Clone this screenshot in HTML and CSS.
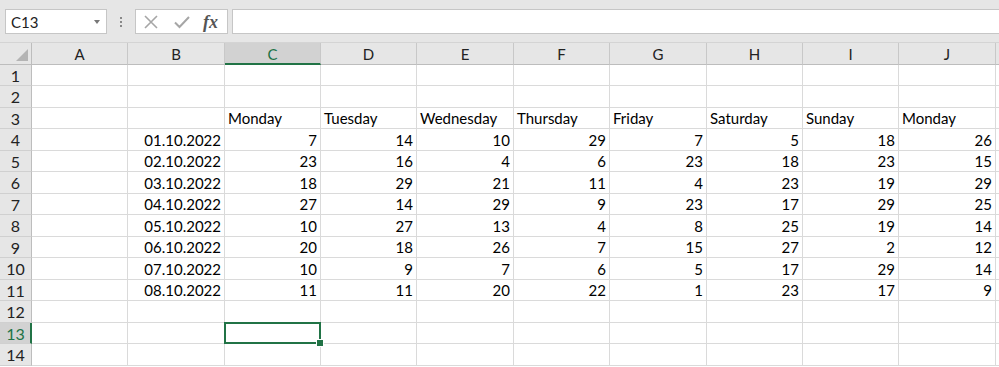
FILE: index.html
```html
<!DOCTYPE html>
<html>
<head>
<meta charset="utf-8">
<link rel="stylesheet" href="styles.css">
</head>
<body>
<div class="toolbar">
  <div class="namebox"><span>C13</span><span class="dd"></span></div>
  <div class="grip"><i></i><i></i><i></i></div>
  <div class="fbuttons">
    <svg class="ico" width="16" height="16" viewBox="0 0 16 16"><path d="M2 2L14 14M14 2L2 14" stroke="#a6a6a6" stroke-width="1.6" fill="none"/></svg>
    <svg class="ico" width="18" height="16" viewBox="0 0 18 16"><path d="M2 8.5L6.5 13L16 3" stroke="#a6a6a6" stroke-width="2" fill="none"/></svg>
    <span class="fx">fx</span>
  </div>
  <div class="finput"></div>
</div>
<div class="sheet">
  <div class="corner"></div><div class="ch">A</div><div class="ch">B</div><div class="ch sel">C</div><div class="ch">D</div><div class="ch">E</div><div class="ch">F</div><div class="ch">G</div><div class="ch">H</div><div class="ch">I</div><div class="ch">J</div><div class="ch"></div>

  <div class="rh">1</div><div class="c"></div><div class="c"></div><div class="c"></div><div class="c"></div><div class="c"></div><div class="c"></div><div class="c"></div><div class="c"></div><div class="c"></div><div class="c"></div><div class="c"></div>
  <div class="rh">2</div><div class="c"></div><div class="c"></div><div class="c"></div><div class="c"></div><div class="c"></div><div class="c"></div><div class="c"></div><div class="c"></div><div class="c"></div><div class="c"></div><div class="c"></div>
  <div class="rh">3</div><div class="c"></div><div class="c"></div><div class="c">Monday</div><div class="c">Tuesday</div><div class="c">Wednesday</div><div class="c">Thursday</div><div class="c">Friday</div><div class="c">Saturday</div><div class="c">Sunday</div><div class="c">Monday</div><div class="c"></div>
  <div class="rh">4</div><div class="c"></div><div class="c n">01.10.2022</div><div class="c n">7</div><div class="c n">14</div><div class="c n">10</div><div class="c n">29</div><div class="c n">7</div><div class="c n">5</div><div class="c n">18</div><div class="c n">26</div><div class="c"></div>
  <div class="rh">5</div><div class="c"></div><div class="c n">02.10.2022</div><div class="c n">23</div><div class="c n">16</div><div class="c n">4</div><div class="c n">6</div><div class="c n">23</div><div class="c n">18</div><div class="c n">23</div><div class="c n">15</div><div class="c"></div>
  <div class="rh">6</div><div class="c"></div><div class="c n">03.10.2022</div><div class="c n">18</div><div class="c n">29</div><div class="c n">21</div><div class="c n">11</div><div class="c n">4</div><div class="c n">23</div><div class="c n">19</div><div class="c n">29</div><div class="c"></div>
  <div class="rh">7</div><div class="c"></div><div class="c n">04.10.2022</div><div class="c n">27</div><div class="c n">14</div><div class="c n">29</div><div class="c n">9</div><div class="c n">23</div><div class="c n">17</div><div class="c n">29</div><div class="c n">25</div><div class="c"></div>
  <div class="rh">8</div><div class="c"></div><div class="c n">05.10.2022</div><div class="c n">10</div><div class="c n">27</div><div class="c n">13</div><div class="c n">4</div><div class="c n">8</div><div class="c n">25</div><div class="c n">19</div><div class="c n">14</div><div class="c"></div>
  <div class="rh">9</div><div class="c"></div><div class="c n">06.10.2022</div><div class="c n">20</div><div class="c n">18</div><div class="c n">26</div><div class="c n">7</div><div class="c n">15</div><div class="c n">27</div><div class="c n">2</div><div class="c n">12</div><div class="c"></div>
  <div class="rh">10</div><div class="c"></div><div class="c n">07.10.2022</div><div class="c n">10</div><div class="c n">9</div><div class="c n">7</div><div class="c n">6</div><div class="c n">5</div><div class="c n">17</div><div class="c n">29</div><div class="c n">14</div><div class="c"></div>
  <div class="rh">11</div><div class="c"></div><div class="c n">08.10.2022</div><div class="c n">11</div><div class="c n">11</div><div class="c n">20</div><div class="c n">22</div><div class="c n">1</div><div class="c n">23</div><div class="c n">17</div><div class="c n">9</div><div class="c"></div>
  <div class="rh">12</div><div class="c"></div><div class="c"></div><div class="c"></div><div class="c"></div><div class="c"></div><div class="c"></div><div class="c"></div><div class="c"></div><div class="c"></div><div class="c"></div><div class="c"></div>
  <div class="rh sel">13</div><div class="c"></div><div class="c"></div><div class="c active"></div><div class="c"></div><div class="c"></div><div class="c"></div><div class="c"></div><div class="c"></div><div class="c"></div><div class="c"></div><div class="c"></div>
  <div class="rh">14</div><div class="c"></div><div class="c"></div><div class="c"></div><div class="c"></div><div class="c"></div><div class="c"></div><div class="c"></div><div class="c"></div><div class="c"></div><div class="c"></div><div class="c"></div>
</div>
</body>
</html>
```
FILE: styles.css
```css
* { box-sizing: border-box; }
html, body { margin: 0; padding: 0; }
body {
  width: 999px;
  height: 367px;
  overflow: hidden;
  background: #fff;
  font-family: Lato, "Liberation Sans", sans-serif;
  color: #000;
}
.toolbar {
  height: 43px;
  background: #e6e6e6;
  display: flex;
  align-items: flex-start;
  padding: 9px 0 0 5px;
  border-bottom: 1px solid #d4d4d4;
}
.namebox {
  width: 102px;
  height: 25px;
  background: #fff;
  border: 1px solid #c6c6c6;
  display: flex;
  align-items: center;
  justify-content: space-between;
  padding: 0 6px 0 5px;
  font-size: 15px;
  color: #222;
}
.dd {
  width: 0; height: 0;
  border-left: 3px solid transparent;
  border-right: 3px solid transparent;
  border-top: 4px solid #777;
}
.grip {
  width: 28px;
  height: 25px;
  display: flex;
  flex-direction: column;
  align-items: center;
  justify-content: center;
  gap: 2px;
}
.grip i {
  display: block;
  width: 2px; height: 2px;
  background: #888;
}
.fbuttons {
  width: 93px;
  height: 25px;
  background: #fff;
  border: 1px solid #c6c6c6;
  display: flex;
  align-items: center;
  padding-left: 7px;
  gap: 14px;
}
.fx {
  font-family: "Liberation Serif", serif;
  font-style: italic;
  font-weight: bold;
  font-size: 18px;
  color: #555;
  margin-left: -2px;
  line-height: 1;
}
.finput {
  flex: 1;
  height: 25px;
  margin-left: 4px;
  background: #fff;
  border: 1px solid #c6c6c6;
  border-right: none;
}
.sheet {
  display: grid;
  grid-template-columns: 32px 96px 97px 96px 96px 97px 96px 97px 96px 96px 97px 1fr;
  grid-template-rows: 22px repeat(7, 21px 22px);
  font-size: 15px;
}
.corner {
  background: #e6e6e6;
  border-right: 1px solid #bdbdbd;
  border-bottom: 1px solid #bdbdbd;
  position: relative;
}
.corner::after {
  content: "";
  position: absolute;
  right: 3px;
  bottom: 3px;
  width: 0; height: 0;
  border-left: 12px solid transparent;
  border-bottom: 12px solid #b4b4b4;
}
.ch {
  background: #e6e6e6;
  border-right: 1px solid #c8c8c8;
  border-bottom: 1px solid #bdbdbd;
  display: flex;
  align-items: center;
  justify-content: center;
  color: #222;
  font-size: 15px;
  padding-top: 1px;
}
.ch.sel {
  background: #d2d2d2;
  border-bottom: 2px solid #217346;
  color: #217346;
  padding-top: 2px;
}
.rh {
  background: #e6e6e6;
  border-right: 1px solid #bdbdbd;
  border-bottom: 1px solid #d0d0d0;
  display: flex;
  align-items: center;
  justify-content: center;
  font-size: 16px;
  color: #222;
}
.rh.sel {
  background: #d2d2d2;
  border-right: 2px solid #217346;
  color: #217346;
  padding-left: 1px;
}
.c {
  border-right: 1px solid #dadada;
  border-bottom: 1px solid #dadada;
  display: flex;
  align-items: flex-end;
  padding: 0 4px 1px 3px;
  white-space: nowrap;
  line-height: 18px;
}
.c.n {
  justify-content: flex-end;
  padding-right: 3px;
}
.c.active {
  position: relative;
}
.c.active::after {
  content: "";
  position: absolute;
  left: -1px;
  top: -1px;
  right: -1px;
  bottom: -1px;
  border: 2px solid #217346;
}
.c.active::before {
  content: "";
  position: absolute;
  right: -4px;
  bottom: -4px;
  width: 6px;
  height: 6px;
  background: #217346;
  border: 1px solid #fff;
  z-index: 2;
}
```
